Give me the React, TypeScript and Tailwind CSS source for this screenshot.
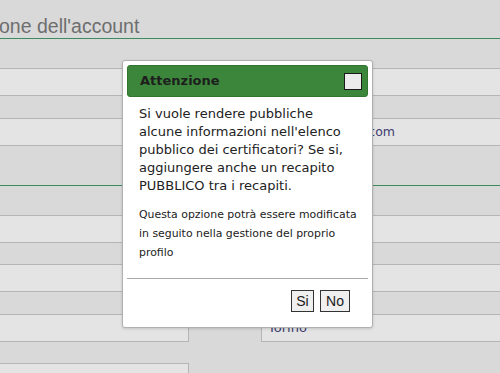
import React from "react";

const Box: React.FC<{ className?: string; children?: React.ReactNode }> = ({ className = "", children }) => (
  <div className={`h-[28px] bg-[#e4e4e4] border border-[#b5b5b5] ${className}`}>{children}</div>
);

export default function App() {
  return (
    <div className="relative w-[500px] h-[373px] overflow-hidden bg-[#d9d9d9] font-['DejaVu_Sans',sans-serif]">
      {/* page under the overlay */}
      <div className="pt-[14px]">
        <h1 className="ml-[-1px] h-[24px] text-[19.5px] leading-[25px] text-[#6e6e6e] font-['Liberation_Sans',Arial,sans-serif] whitespace-nowrap">
          one dell'account
        </h1>
        <div className="h-px bg-[#3e8a5e]" />
      </div>

      <div className="pt-[29px] flex flex-col">
        <Box className="-mx-px" />
        <div className="h-[22px]" />
        <Box className="-mx-px flex items-center">
          <span className="w-[395px] text-right text-[12.5px] text-[#3d3d6e] whitespace-nowrap">info.mario@libero.com</span>
        </Box>
        <div className="h-[39px]" />
        <div className="h-px bg-[#3e8a5e]" />
        <div className="h-[29px]" />
        <Box className="-mx-px" />
        <div className="h-[21px]" />
        <Box className="-mx-px" />
        <div className="h-[22px]" />
        <div className="flex justify-between">
          <Box className="w-[190px] -ml-px" />
          <Box className="w-[240px] -mr-px flex items-center">
            <span className="pl-[6px] text-[13px] text-[#3d3d6e]">Torino</span>
          </Box>
        </div>
        <div className="h-[21px]" />
        <Box className="w-[190px] -ml-px" />
      </div>

      {/* dialog */}
      <div className="absolute left-[122px] top-[60px] w-[251px] h-[268px] bg-white border border-[#b0b0b0] rounded-[3px] p-[4px] shadow-[0_1px_3px_rgba(0,0,0,0.15)] flex flex-col">
        <div className="h-[32px] bg-[#3b863a] border border-[#317531] rounded-[3px] flex items-center justify-between pl-[12px] pr-[5px]">
          <span className="text-[13px] font-bold text-[#1e1e1e]">Attenzione</span>
          <button className="w-[18px] h-[17px] bg-[#ececec] border border-[#1a1a1a]" />
        </div>
        <div className="px-[12px] pt-[8px]">
          <p className="text-[13px] leading-[18px] text-[#222] w-[218px]">
            Si vuole rendere pubbliche alcune informazioni nell'elenco pubblico dei certificatori? Se si, aggiungere anche un recapito PUBBLICO tra i recapiti.
          </p>
          <p className="mt-[10px] text-[10.9px] leading-[19px] text-[#222] w-[223px]">
            Questa opzione potrà essere modificata in seguito nella gestione del proprio profilo
          </p>
        </div>
        <div className="mt-auto border-t border-[#a9a9a9] flex justify-end gap-[6px] pt-[11px] pb-[11px] pr-[18px]">
          <button className="w-[23px] h-[22px] bg-[#efefef] border border-[#333] text-[14px] text-[#1a1a1a] font-['Liberation_Sans',Arial,sans-serif] leading-none">
            Si
          </button>
          <button className="w-[30px] h-[22px] bg-[#efefef] border border-[#333] text-[14px] text-[#1a1a1a] font-['Liberation_Sans',Arial,sans-serif] leading-none">
            No
          </button>
        </div>
      </div>
    </div>
  );
}
